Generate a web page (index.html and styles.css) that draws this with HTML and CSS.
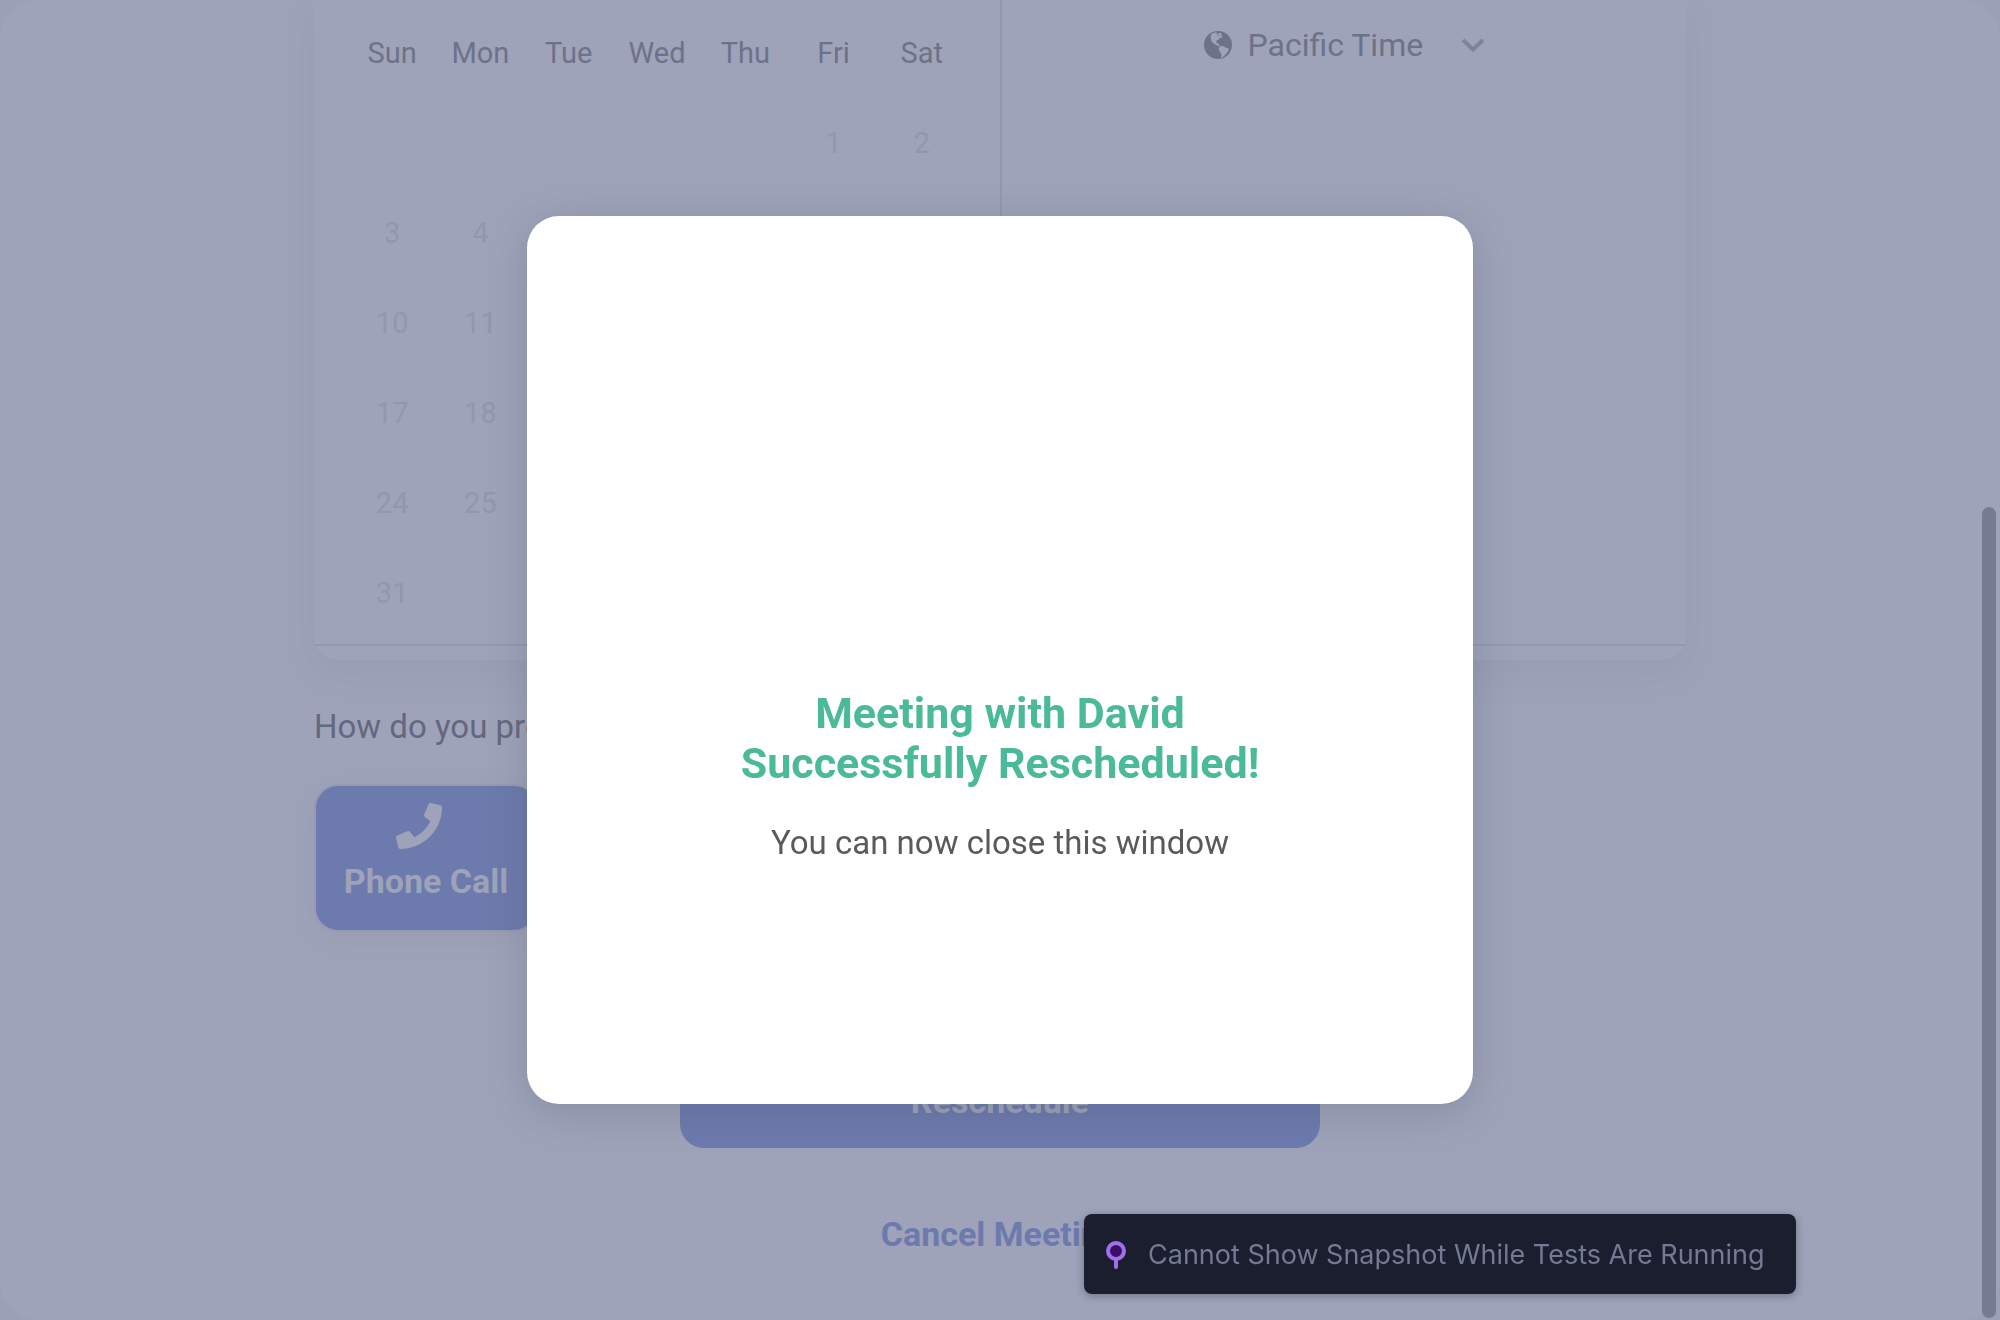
FILE: index.html
```html
<!DOCTYPE html>
<html lang="en">
<head>
<meta charset="utf-8">
<meta name="viewport" content="width=device-width, initial-scale=1">
<title>Reschedule meeting</title>
<link rel="stylesheet" href="styles.css">
</head>
<body>
<main class="page">
  <div class="content">
    <section class="card">
      <div class="card-columns">
        <div class="calendar-pane">
          <table class="calendar">
            <thead>
              <tr><th scope="col">Sun</th><th scope="col">Mon</th><th scope="col">Tue</th><th scope="col">Wed</th><th scope="col">Thu</th><th scope="col">Fri</th><th scope="col">Sat</th></tr>
            </thead>
            <tbody>
              <tr><td></td><td></td><td></td><td></td><td></td><td>1</td><td>2</td></tr>
              <tr><td>3</td><td>4</td><td></td><td></td><td></td><td></td><td></td></tr>
              <tr><td>10</td><td>11</td><td></td><td></td><td></td><td></td><td></td></tr>
              <tr><td>17</td><td>18</td><td></td><td></td><td></td><td></td><td></td></tr>
              <tr><td>24</td><td>25</td><td></td><td></td><td></td><td></td><td></td></tr>
              <tr><td>31</td><td></td><td></td><td></td><td></td><td></td><td></td></tr>
            </tbody>
          </table>
        </div>
        <div class="time-pane">
          <div class="timezone">
            <svg class="globe" viewBox="0 0 28 28" aria-hidden="true">
              <circle class="globe-sea" cx="14" cy="14" r="14"/>
              <path class="globe-land" d="M7.5 2.8 11 1.4 13 1.6 12.2 2.8 14 3.2 15.2 2 17.8 2.6 17.2 4.6 18.6 5.6 17.4 7.2 15.6 6.6 14.8 8.4 12.6 9.4 12 11.2 13.2 11.4 13.6 12.6 15.4 13.4 16.2 15.2 14 15 11.4 13.6 9 12.2 7.2 9.6 6.6 6.2Z"/>
              <path class="globe-land" d="M15.6 15.6 18.6 15 21.6 16.6 24.4 17.6 24.6 19.4 22.4 22.4 20.4 24.6 18 26.8 16.8 26.6 17.6 23.2 15.8 20.4 14.6 18Z"/>
              <path class="globe-sea" d="M13.6 3.8 15 4.4 14.4 5.2 13.2 4.8Z"/>
            </svg>
            <select class="timezone-select" aria-label="Time zone"><option>Pacific Time</option></select>
            <svg class="chevron" viewBox="0 0 24 14" aria-hidden="true"><path d="M2 2 12 11.500 22 2"/></svg>
          </div>
        </div>
      </div>
      <div class="card-foot"></div>
    </section>

    <h2 class="question">How do you prefer to meet?</h2>
    <div class="options">
      <button type="button" class="option">
        <svg class="phone" viewBox="0 0 512 512" aria-hidden="true"><path d="M493.400 24.600l-104-24c-11.300-2.600-22.900 3.300-27.500 13.900l-48 112c-4.200 9.800-1.400 21.300 6.900 28l60.600 49.600c-36 76.700-98.900 140.500-177.200 177.200l-49.600-60.600c-6.800-8.300-18.200-11.100-28-6.900l-112 48C3.900 366.500-2 378.100.6 389.400l24 104C27.100 504.200 36.700 512 48 512c256.100 0 464-207.500 464-464 0-11.200-7.700-20.900-18.600-23.400z"/></svg>
        <span>Phone Call</span>
      </button>
    </div>

    <div class="actions">
      <button type="button" class="submit">Reschedule</button>
      <a class="cancel" href="#cancel">Cancel Meeting</a>
    </div>
  </div>
</main>

<div class="scrollbar"></div>

<div class="overlay">
  <section class="dialog" role="dialog" aria-modal="true" aria-labelledby="dialog-title">
    <h1 class="dialog-title" id="dialog-title">Meeting with David<br>Successfully Rescheduled!</h1>
    <p class="dialog-text">You can now close this window</p>
  </section>
</div>

<div class="toast" role="status">
  <svg class="pin" viewBox="0 0 20 28" aria-hidden="true">
    <path d="M10 18V26"/>
    <circle cx="10" cy="10" r="8"/>
  </svg>
  <span>Cannot Show Snapshot While Tests Are Running</span>
</div>
</body>
</html>
```
FILE: styles.css
```css
:root {
  --page: #9ea3b9;
  --edge: #9ca0b7;
  --line: #9398ae;
  --muted: #9297ae;
  --text: #6d7289;
  --text-strong: #64687e;
  --primary: #6c7aad;
}

* {
  box-sizing: border-box;
}

body {
  margin: 0;
  background: var(--edge);
  color: var(--text);
  font-family: Roboto, "Liberation Sans", sans-serif;
  font-size: 33px;
  font-weight: 400;
  line-height: 40px;
}

button,
select {
  font: inherit;
  color: inherit;
}

.page {
  min-height: 100vh;
  border-radius: 40px;
  background: var(--page);
}

.content {
  max-width: 1372px;
  margin: 0 auto;
}

.card {
  border-radius: 0 0 24px 24px;
  background: var(--page);
  box-shadow: 0 12px 40px rgba(70, 76, 104, 0.08);
}

.card-columns {
  display: grid;
  grid-template-columns: 1fr 1fr;
  border-bottom: 2px solid var(--line);
}

.card-foot {
  height: 14px;
}

.calendar-pane {
  padding: 8px 34px 6px;
}

.time-pane {
  border-left: 2px solid var(--line);
}

.calendar {
  width: 100%;
  table-layout: fixed;
  border-collapse: collapse;
  font-size: 29px;
  text-align: center;
}

.calendar th,
.calendar td {
  height: 90px;
  padding: 0;
}

.calendar th {
  font-weight: 400;
}

.calendar td {
  color: var(--muted);
}

.timezone {
  display: flex;
  align-items: center;
  justify-content: center;
  padding-top: 25px;
}

.globe {
  width: 28px;
  height: 28px;
  margin-right: 16px;
}

.globe-sea {
  fill: var(--text);
}

.globe-land {
  fill: var(--page);
}

.timezone-select {
  height: 40px;
  padding: 0;
  border: 0;
  background: none;
  font-size: 32px;
  appearance: none;
}

.chevron {
  width: 24px;
  height: 14px;
  margin-left: 36px;
  fill: none;
  stroke: #7e839a;
  stroke-width: 4px;
}

.question {
  margin: 47px 0 0;
  color: var(--text-strong);
  font-size: 33px;
  font-weight: 400;
}

.options {
  display: flex;
  margin-top: 37px;
}

.option {
  display: flex;
  flex-direction: column;
  align-items: center;
  gap: 12px;
  width: 224px;
  height: 148px;
  padding: 17px 0 0;
  border: 2px solid #969bb1;
  border-radius: 24px;
  background: var(--primary);
  box-shadow: 0 8px 32px rgba(70, 76, 104, 0.06);
  color: var(--page);
  font-size: 34px;
  font-weight: 700;
}

.phone {
  width: 46px;
  height: 46px;
  margin-right: 14px;
  fill: var(--page);
}

.actions {
  display: flex;
  flex-direction: column;
  align-items: center;
  gap: 66px;
  padding: 122px 0 64px;
}

.submit {
  width: 640px;
  max-width: 100%;
  height: 94px;
  border: 0;
  border-radius: 24px;
  background: var(--primary);
  color: var(--page);
  font-size: 34px;
  font-weight: 700;
}

.cancel {
  color: var(--primary);
  font-size: 34px;
  font-weight: 700;
  text-decoration: none;
}

.overlay {
  position: fixed;
  inset: 0;
  display: flex;
  align-items: center;
  justify-content: center;
}

.dialog {
  width: 946px;
  max-width: 90%;
  min-height: 888px;
  padding: 472px 64px 0;
  border-radius: 32px;
  background: #fff;
  box-shadow: 0 8px 40px rgba(80, 86, 100, 0.28);
  text-align: center;
}

.dialog-title {
  margin: 0;
  color: #4bba98;
  font-size: 43px;
  font-weight: 700;
  line-height: 50px;
}

.dialog-text {
  margin: 35px 0 0;
  color: #5a5a5a;
}

.scrollbar {
  position: fixed;
  top: 507px;
  right: 4px;
  bottom: 2px;
  width: 14px;
  border-radius: 7px;
  background: #777b92;
}

.toast {
  position: fixed;
  right: 204px;
  bottom: 26px;
  display: flex;
  align-items: center;
  gap: 22px;
  width: 712px;
  height: 80px;
  padding: 2px 22px 0;
  border-radius: 8px;
  background: #1b1e2e;
  box-shadow: 0 2px 8px rgba(40, 44, 70, 0.4);
  color: #747994;
  font-family: Inter, "Liberation Sans", sans-serif;
  font-size: 27px;
  font-weight: 400;
  white-space: nowrap;
}

.pin {
  flex: none;
  width: 20px;
  height: 28px;
  fill: #3b0f66;
  stroke: #a270ea;
  stroke-width: 4px;
  stroke-linecap: round;
}
```
